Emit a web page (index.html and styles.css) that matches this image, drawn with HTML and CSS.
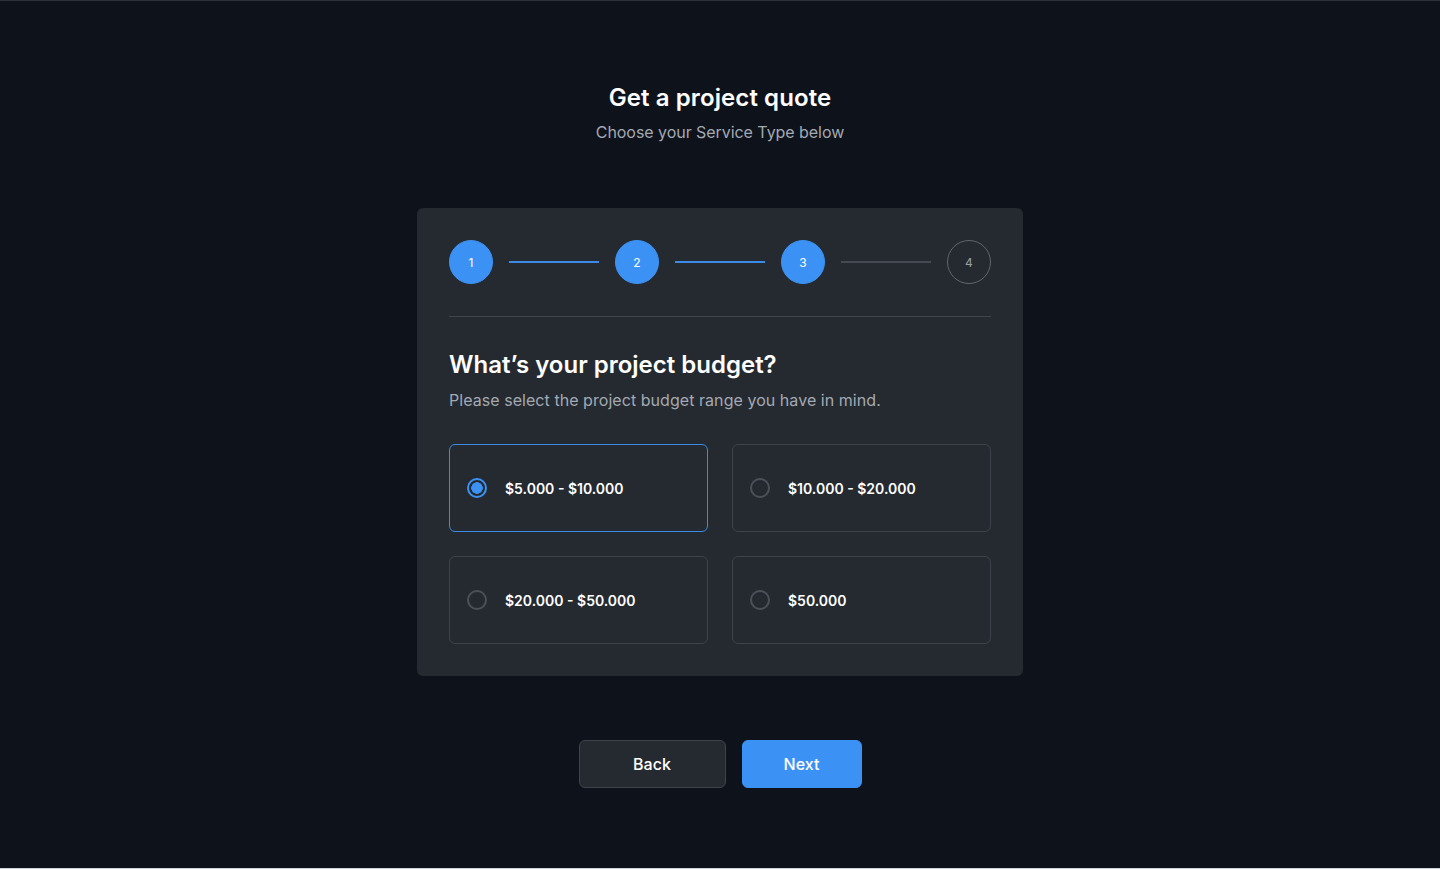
FILE: index.html
```html
<!DOCTYPE html>
<html lang="en">
<head>
<meta charset="utf-8">
<title>Get a project quote</title>
<link rel="stylesheet" href="styles.css">
</head>
<body>
<main class="page">
  <header class="intro">
    <h1 class="title">Get a project quote</h1>
    <p class="subtitle">Choose your Service Type below</p>
  </header>

  <section class="card">
    <div class="stepper">
      <span class="step step-done">1</span>
      <span class="line line-done"></span>
      <span class="step step-done">2</span>
      <span class="line line-done"></span>
      <span class="step step-done">3</span>
      <span class="line"></span>
      <span class="step">4</span>
    </div>
    <hr class="divider">
    <h2 class="question">What’s your project budget?</h2>
    <p class="hint">Please select the project budget range you have in mind.</p>
    <div class="options">
      <label class="option option-selected"><span class="radio radio-on"></span><span class="option-label">$5.000 - $10.000</span></label>
      <label class="option"><span class="radio"></span><span class="option-label">$10.000 - $20.000</span></label>
      <label class="option"><span class="radio"></span><span class="option-label">$20.000 - $50.000</span></label>
      <label class="option"><span class="radio"></span><span class="option-label">$50.000</span></label>
    </div>
  </section>

  <div class="actions">
    <button class="btn btn-back" type="button">Back</button>
    <button class="btn btn-next" type="button">Next</button>
  </div>
</main>
</body>
</html>
```

FILE: styles.css
```css
* { box-sizing: border-box; }

html, body {
  margin: 0;
  height: 100%;
}

body {
  background: #0e121b;
  font-family: Inter, "Noto Sans", sans-serif;
  color: #ffffff;
  border-top: 1px solid #2b3039;
  border-bottom: 1px solid #cfd3d9;
  overflow: hidden;
}

.page {
  display: flex;
  flex-direction: column;
  align-items: center;
  padding-top: 81px;
}

.intro {
  display: flex;
  flex-direction: column;
  align-items: center;
  gap: 6px;
}

.title {
  margin: 0;
  font-size: 24px;
  line-height: 32px;
  font-weight: 600;
  letter-spacing: 0.1px;
}

.subtitle {
  margin: 0;
  font-size: 16px;
  line-height: 24px;
  color: #a3a9b3;
  letter-spacing: -0.05px;
}

.card {
  margin-top: 64px;
  width: 606px;
  padding: 32px;
  background: #252a30;
  border-radius: 6px;
  display: flex;
  flex-direction: column;
}

.stepper {
  display: flex;
  align-items: center;
  height: 44px;
}

.step {
  width: 44px;
  height: 44px;
  flex: none;
  border-radius: 50%;
  border: 1px solid #61666e;
  display: flex;
  align-items: center;
  justify-content: center;
  font-size: 12px;
  color: #9ba1aa;
}

.step-done {
  background: #3c92f4;
  border-color: #3c92f4;
  color: #ffffff;
}

.line {
  flex: 1;
  height: 2px;
  margin: 0 16px;
  background: #454a52;
}

.line-done { background: #3c8ae6; }

.divider {
  margin: 32px 0 0;
  border: 0;
  height: 1px;
  background: #40454d;
}

.question {
  margin: 32px 0 0;
  font-size: 24px;
  line-height: 32px;
  font-weight: 600;
  letter-spacing: 0;
}

.hint {
  margin: 7px 0 0;
  font-size: 16px;
  line-height: 24px;
  color: #a3a9b3;
  letter-spacing: 0.05px;
}

.options {
  margin-top: 32px;
  display: grid;
  grid-template-columns: 1fr 1fr;
  gap: 24px;
}

.option {
  height: 88px;
  border: 1px solid #3e434b;
  border-radius: 6px;
  display: flex;
  align-items: center;
  gap: 18px;
  padding-left: 17px;
  cursor: pointer;
}

.option-selected { border-color: #3b8ae4; }

.radio {
  width: 20px;
  height: 20px;
  flex: none;
  border-radius: 50%;
  border: 2px solid #4b5159;
}

.radio-on {
  border-color: #3c92f4;
  background: radial-gradient(circle, #3c92f4 0 5.5px, transparent 6px);
}

.option-label {
  font-size: 14px;
  font-weight: 600;
  color: #ffffff;
}

.actions {
  margin-top: 64px;
  display: flex;
  gap: 16px;
}

.btn {
  height: 48px;
  border-radius: 6px;
  font-family: Inter, "Noto Sans", sans-serif;
  font-size: 16px;
  font-weight: 500;
  color: #ffffff;
  cursor: pointer;
}

.btn-back {
  width: 147px;
  background: #252a30;
  border: 1px solid #3e434b;
}

.btn-next {
  width: 120px;
  background: #3c92f4;
  border: 1px solid #3c92f4;
}
```
